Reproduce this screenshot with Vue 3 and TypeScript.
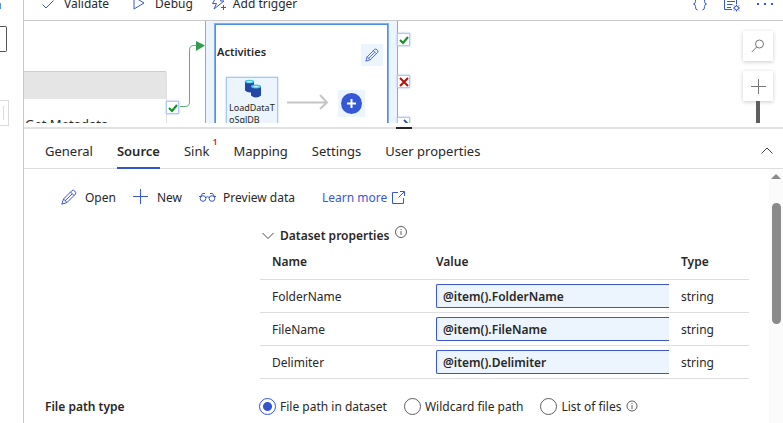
<script setup lang="ts">
import { ref } from 'vue'

interface DatasetProperty {
  name: string
  value: string
  type: string
}

interface Tab {
  label: string
  errors?: number
}

const tabs: Tab[] = [
  { label: 'General' },
  { label: 'Source' },
  { label: 'Sink', errors: 1 },
  { label: 'Mapping' },
  { label: 'Settings' },
  { label: 'User properties' },
]
const activeTab = ref('Source')

const properties = ref<DatasetProperty[]>([
  { name: 'FolderName', value: '@item().FolderName', type: 'string' },
  { name: 'FileName', value: '@item().FileName', type: 'string' },
  { name: 'Delimiter', value: '@item().Delimiter', type: 'string' },
])

const pathTypes = ['File path in dataset', 'Wildcard file path', 'List of files']
const pathType = ref(pathTypes[0])
</script>

<template>
  <div class="page">
    <aside class="rail">
      <i class="rail-accent"></i>
      <i class="rail-search"></i>
      <i class="rail-item"></i>
    </aside>

    <main class="main">
      <header class="toolbar">
        <button class="tool">
          <svg width="12" height="16" viewBox="0 0 12 16" class="line"><path d="M.5 8.500 4 12 11.500 4.500" /></svg>
          Validate
        </button>
        <button class="tool">
          <svg width="12" height="16" viewBox="0 0 12 16" class="line"><path d="M1 1v12l10-6z" /></svg>
          Debug
        </button>
        <button class="tool trigger">
          <svg width="16" height="16" viewBox="0 0 16 16" class="line"><path d="M6 0h6L9.500 5H13L3 13 5.500 7.500H1.500zM12.500 9v5M10 11.500h5" /></svg>
          Add trigger
        </button>
        <span class="spacer"></span>
        <button class="tool glyph" aria-label="Code">
          <svg width="16" height="16" viewBox="0 0 16 16" class="line"><path d="M5.500 0Q3.500 0 3.500 2V4.500Q3.500 6.500 1.500 7q2 .5 2 2.500V10Q3.500 13 5.500 13M10.500 0q2 0 2 2v2.500q0 2 2 2.500-2 .5-2 2.500v.5q0 3-2 3" /></svg>
        </button>
        <button class="tool glyph" aria-label="Properties">
          <svg width="16" height="16" viewBox="0 0 16 16" class="line"><path d="M8 12.500H.5V.5h12V7M3 4.500h8M3 7.500h5.500M3 10.500h4" /><circle cx="12.500" cy="11" r="2" /><path d="M12.500 7.500V9M12.500 13v1.500M9 11h1.500M14.500 11H16M10 8.500l1 1M14 12.500l1 1M15 8.500l-1 1M11 12.500l-1 1" /></svg>
        </button>
        <button class="tool glyph" aria-label="More">
          <svg width="18" height="16" viewBox="0 0 18 16" fill="#3a57d0"><path d="M1 6h2v2H1zM8 6h2v2H8zM15 6h2v2h-2z" /></svg>
        </button>
      </header>

      <section class="canvas">
        <div class="meta-node"><div class="meta-head"></div><div class="meta-title">Get Metadata</div></div>
        <div class="loop-node">
          <div class="loop-inner">
            <div class="loop-head">
              <b>Activities</b>
              <button class="edit" aria-label="Edit activities">
                <svg width="14" height="14" viewBox="0 0 16 16" class="line"><path d="M1 15l1.500-5L11 1.500q1.500-1 2.800.7 1.700 1.300.7 2.800L6 13.500zM2.500 10 6 13.500M9.500 3l3.500 3.500M4 11.800 11 5" /></svg>
              </button>
            </div>
            <div class="flow">
              <div class="copy-card">
                <svg width="18" height="19" viewBox="0 0 18 19">
                  <path d="M1 2.500v9q2 2 5 2h4v-11z" fill="#2447a5" />
                  <ellipse cx="5.500" cy="2.500" rx="4.800" ry="1.800" fill="#45c5e4" />
                  <ellipse cx="5.500" cy="2.800" rx="3" ry=".8" fill="#c2f2fb" />
                  <path d="M7 7.500v9q2 2 5 2t5-2v-9z" fill="#2447a5" />
                  <ellipse cx="12" cy="7.500" rx="5" ry="1.900" fill="#45c5e4" />
                  <ellipse cx="12" cy="7.700" rx="3" ry=".8" fill="#c2f2fb" />
                </svg>
                <div class="copy-name">LoadDataToSqlDB</div>
              </div>
              <svg class="flow-arrow" width="42" height="16" viewBox="0 0 42 16" fill="none" stroke="#c8c6c4" stroke-width="2"><path d="M0 8.500h40M33 1l7 7.500L33 15" /></svg>
              <button class="add" aria-label="Add activity">
                <svg width="21" height="21" viewBox="0 0 21 21"><circle cx="10.500" cy="10.500" r="10.500" fill="#3558d6" /><path d="M10.500 6v9M6 10.500h9" stroke="#fff" stroke-width="2" /></svg>
              </button>
            </div>
          </div>
        </div>
        <svg class="link" width="28" height="72" viewBox="0 0 28 72">
          <path d="M2 65.500h5q4.500 0 4.500-4.500V9q0-4.500 4.500-4.500h4" fill="none" stroke="#5fb277" />
          <path d="M18 0l9 4.500L18 10z" fill="#319b50" />
        </svg>
        <span class="port port-meta"><svg width="10" height="10" viewBox="0 0 10 10"><path d="M1 5l3 3 5-6" stroke="#0b9320" /></svg></span>
        <span class="port port-ok"><svg width="10" height="10" viewBox="0 0 10 10"><path d="M1 5l3 3 5-6" stroke="#0b9320" /></svg></span>
        <span class="port port-fail"><svg width="10" height="10" viewBox="0 0 10 10"><path d="M1 1l8 8M9 1L1 9" stroke="#b80d0d" /></svg></span>
        <span class="port port-done"><svg width="10" height="10" viewBox="0 0 10 10"><path d="M5 1l4 4-4 4M0 5h8" stroke="#2c59b8" /></svg></span>
        <div class="zoom">
          <button aria-label="Search canvas"><svg width="14" height="14" viewBox="0 0 14 14"><circle cx="8.500" cy="5" r="4" /><path d="M5.600 8 .8 13" /></svg></button>
          <button aria-label="Zoom in"><svg width="15" height="15" viewBox="0 0 15 15"><path d="M7.500 0v15M0 7.500h15" /></svg></button>
          <i></i>
        </div>
      </section>

      <div class="splitter"><i></i></div>

      <nav class="tabs">
        <button
          v-for="tab in tabs"
          :key="tab.label"
          class="tab"
          :class="{ active: tab.label === activeTab }"
          @click="activeTab = tab.label"
        >
          {{ tab.label }}<sup v-if="tab.errors">{{ tab.errors }}</sup>
        </button>
        <span class="spacer"></span>
        <button class="collapse" aria-label="Collapse">
          <svg width="12" height="8" viewBox="0 0 12 8"><path d="M.5 6.500 6 1l5.500 5.500" /></svg>
        </button>
      </nav>

      <div class="panel">
        <div class="content">
          <div class="actions">
            <button class="action">
              <svg width="16" height="16" viewBox="0 0 16 16" class="line"><path d="M.8 15.200l1.700-5.200L11 1.500q1.500-1 2.800.7 1.700 1.300.7 2.800L6 13.500zM2.500 10 6 13.500M9.500 3l3.500 3.500M4 11.800 11 5" /></svg>
              Open
            </button>
            <button class="action">
              <svg width="16" height="16" viewBox="0 0 16 16" class="line"><path d="M7.500 0v15M0 7.500h15" /></svg>
              New
            </button>
            <button class="action preview">
              <svg width="17" height="16" viewBox="0 0 17 16" class="line"><circle cx="4" cy="9.500" r="2.800" /><circle cx="13" cy="9.500" r="2.800" /><path d="M6.500 8.500q2-1.500 4 0M0 7.500h2.500M14.500 7.500H17M1.500 7.500 3.500 4.500h2.500M15.500 7.500 13.500 4.500h-2.500" /></svg>
              Preview data
            </button>
            <a class="learn" href="#">
              Learn more
              <svg width="13" height="13" viewBox="0 0 13 13" class="line"><path d="M6 1.500H.5v11h11V7M8 .5h4.500V5M12.500.5 6.500 6.500" /></svg>
            </a>
          </div>

          <section class="dataset">
            <h2>
              <svg width="12" height="8" viewBox="0 0 12 8" class="chevron"><path d="M.5 1 6 6.500 11.500 1" /></svg>
              Dataset properties
              <svg width="12" height="12" viewBox="0 0 12 12" class="info raised"><circle cx="6" cy="6" r="5.500" /><path d="M6 5v4M6 3v1" /></svg>
            </h2>
            <table>
              <thead>
                <tr><th class="col-name">Name</th><th>Value</th><th class="col-type">Type</th></tr>
              </thead>
              <tbody>
                <tr v-for="row in properties" :key="row.name">
                  <td>{{ row.name }}</td>
                  <td class="value"><input v-model="row.value" type="text" :aria-label="row.name" /></td>
                  <td>{{ row.type }}</td>
                </tr>
              </tbody>
            </table>
          </section>

          <div class="path-row" role="radiogroup" aria-labelledby="path-label">
            <span id="path-label" class="path-label">File path type</span>
            <label v-for="option in pathTypes" :key="option" class="option">
              <input v-model="pathType" type="radio" name="path-type" :value="option" />
              {{ option }}
            </label>
            <svg width="12" height="12" viewBox="0 0 12 12" class="info"><circle cx="6" cy="6" r="5" /><path d="M6 5v4M6 3v1" /></svg>
          </div>
        </div>
        <div class="scrollbar"><i class="up"></i><i class="thumb"></i></div>
      </div>
    </main>
  </div>
</template>

<style>
body {
  background: #fff;
}
</style>

<style scoped>
* {
  box-sizing: border-box;
}
.page {
  display: flex;
  height: 100vh;
  overflow: hidden;
  font: 12px/19px "Noto Sans", "Open Sans", sans-serif;
  color: #292827;
}
button {
  border: 0;
  padding: 0;
  background: none;
  font: inherit;
  color: inherit;
  white-space: nowrap;
}
svg {
  display: block;
  flex: none;
}
.line {
  fill: none;
  stroke: #3a57d0;
}
.spacer {
  flex: 1;
}
.rail {
  flex: none;
  width: 24px;
  border-right: 1px solid #c8c8c8;
}
.rail i {
  display: block;
}
.rail-accent {
  width: 1px;
  height: 6px;
  margin: 3px 0 17px;
  background: #5b94e0;
}
.rail-search {
  width: 7px;
  height: 26px;
  border: 1px solid #555;
  border-left: 0;
  border-radius: 0 2px 2px 0;
}
.rail-item {
  width: 9px;
  height: 26px;
  margin-top: 48px;
  padding: 5px 4px 5px 0;
  border: 1px solid #dcdcdc;
  border-left: 0;
}
.rail-item::after {
  content: "";
  display: block;
  height: 14px;
  border-right: 1px solid #dcdcdc;
}
.main {
  flex: 1;
  min-width: 0;
  display: flex;
  flex-direction: column;
}
.toolbar {
  flex: none;
  display: flex;
  align-items: flex-end;
  height: 21px;
  padding: 0 9px 7px 18px;
  border-bottom: 1px solid #c8c8c8;
  overflow: hidden;
}
.tool {
  display: flex;
  align-items: center;
  gap: 10px;
  margin-right: 24px;
}
.tool.trigger {
  gap: 6px;
  margin-left: -6px;
}
.tool.glyph {
  margin: 0 0 0 16px;
}
.canvas {
  position: relative;
  flex: none;
  height: 102px;
  overflow: hidden;
}
.meta-node {
  position: absolute;
  left: 0;
  top: 50px;
  width: 143px;
  height: 80px;
  border: 1px solid #ccc;
  border-left: 0;
  border-right-color: #e1e1e1;
  border-radius: 0 2px 0 0;
}
.meta-head {
  height: 27px;
  background: #e5e5e5;
}
.meta-title {
  padding: 16px 0 0 1px;
  font-size: 13px;
}
.loop-node {
  position: absolute;
  left: 181px;
  top: 0;
  width: 193px;
  height: 130px;
  padding: 3px 9px 0;
  border: solid #86a6ee;
  border-width: 0 1px;
  background: #ecf4fd;
}
.loop-inner {
  height: 130px;
  border: 1px solid #4f8fe0;
  box-shadow: 0 0 0 1px #7fb0ea;
  background: #fff;
}
.loop-head {
  display: flex;
  align-items: center;
  justify-content: space-between;
  padding: 19px 4px 0 1px;
  font-size: 11px;
}
.loop-head b {
  font-weight: 600;
  margin-top: -8px;
}
.edit {
  display: grid;
  place-items: center;
  width: 22px;
  height: 22px;
  background: #ecf4fd;
}
.flow {
  display: flex;
  align-items: flex-start;
  padding: 11px 0 0 10px;
}
.copy-card {
  flex: none;
  width: 52px;
  height: 60px;
  padding: 1px 0 0 2px;
  border: 1px solid #a5c9f3;
  box-shadow: 0 0 2px #a5c9f3;
  background: #ecf4fd;
  font-size: 9px;
  line-height: 12px;
}
.copy-card svg {
  margin: 0 0 4px 15px;
}
.copy-name {
  word-break: break-all;
}
.flow-arrow {
  margin: 17px 9px 0;
}
.add {
  display: grid;
  place-items: center;
  width: 27px;
  height: 27px;
  margin-top: 13px;
  background: #ecf4fd;
}
.link {
  position: absolute;
  left: 154px;
  top: 20px;
}
.port {
  position: absolute;
  display: grid;
  place-items: center;
  width: 13px;
  height: 13px;
  border: 1px solid #b4c8f6;
  box-shadow: 0 0 2px #9db8f2;
  background: #fff;
}
.port path {
  fill: none;
  stroke-width: 2;
}
.port-meta {
  left: 142px;
  top: 80px;
}
.port-ok {
  left: 373px;
  top: 12px;
}
.port-fail {
  left: 373px;
  top: 54px;
}
.port-done {
  left: 373px;
  top: 96px;
}
.zoom {
  position: absolute;
  right: 10px;
  top: 10px;
}
.zoom button {
  display: grid;
  place-items: center;
  width: 30px;
  height: 30px;
  margin-bottom: 10px;
  background: #fff;
  box-shadow: 0 1px 4px #ccc;
}
.zoom svg {
  fill: none;
  stroke: #797775;
}
.zoom i {
  display: block;
  width: 4px;
  height: 30px;
  margin: -10px auto 0;
  background: #605e5c;
}
.splitter {
  flex: none;
  height: 6px;
  padding-top: 4px;
}
.splitter::after {
  content: "";
  display: block;
  height: 2px;
  margin-top: -2px;
  background: #e1e1e1;
}
.splitter i {
  display: block;
  position: relative;
  width: 16px;
  height: 2px;
  margin: 0 auto;
  background: #252423;
}
.tabs {
  flex: none;
  display: flex;
  gap: 24px;
  height: 40px;
  padding: 0 10px 0 21px;
  border-bottom: 1px solid #dedede;
  font-size: 13px;
  line-height: 18px;
}
.tab {
  position: relative;
  padding-top: 4px;
  height: 40px;
}
.tab.active {
  font-weight: 600;
  border-bottom: 2px solid #3355d1;
  padding-top: 6px;
}
.tab sup {
  position: absolute;
  left: 100%;
  top: 5px;
  margin-left: 3px;
  font-size: 9px;
  font-weight: 600;
  line-height: 16px;
  color: #e0202c;
}
.collapse svg,
.chevron {
  fill: none;
  stroke: #484644;
}
.collapse {
  padding-top: 4px;
}
.panel {
  flex: 1;
  min-height: 0;
  display: flex;
}
.content {
  flex: 1;
  min-width: 0;
  padding: 18px 20px 0 21px;
  overflow: hidden;
}
.actions {
  display: flex;
  align-items: center;
  height: 20px;
  padding-left: 16px;
}
.action {
  display: flex;
  align-items: center;
  gap: 8px;
  margin-right: 17px;
}
.action.preview {
  gap: 7px;
  margin-right: 27px;
}
.learn {
  display: flex;
  align-items: center;
  gap: 5px;
  color: #3a57d0;
  text-decoration: none;
  white-space: nowrap;
}
.dataset {
  margin-left: 215px;
}
h2 {
  display: flex;
  align-items: center;
  gap: 6px;
  height: 19px;
  margin: 19px 0 0;
  padding-left: 2px;
  font-size: 12px;
  font-weight: 600;
}
.info {
  fill: none;
  stroke: #605e5c;
}
.raised {
  align-self: flex-start;
}
table {
  width: 100%;
  border-collapse: collapse;
  table-layout: fixed;
}
th,
td {
  height: 33px;
  padding: 1px 0 0 12px;
  border-bottom: 1px solid #dedede;
  text-align: left;
}
th {
  height: 34px;
  padding: 0;
  font-weight: 600;
}
th.col-name {
  width: 176px;
  padding-left: 12px;
}
th.col-type {
  width: 80px;
  padding-left: 12px;
}
td.value {
  padding: 0;
}
.value input {
  display: block;
  width: 100%;
  height: 24px;
  padding: 1px 6px 0;
  border: 1px solid #3a57d0;
  border-right: 0;
  border-radius: 2px 0 0 2px;
  outline: 0;
  background: #ecf4fd;
  font: inherit;
  font-weight: 600;
  color: inherit;
}
.path-row {
  display: flex;
  align-items: center;
  height: 19px;
  margin-top: 18px;
  white-space: nowrap;
}
.path-label {
  width: 214px;
  font-weight: 600;
}
.option {
  display: flex;
  align-items: center;
  gap: 4px;
  margin-right: 17px;
}
.option:last-of-type {
  margin-right: 5px;
}
.option input {
  appearance: none;
  width: 17px;
  height: 17px;
  margin: 0;
  border: 1px solid #605e5c;
  border-radius: 50%;
}
.option input:checked {
  border-color: #3355d1;
  background: radial-gradient(circle, #3355d1 4px, transparent 5px);
}
.scrollbar {
  display: flex;
  flex-direction: column;
  align-items: center;
  width: 14px;
  background: #fbfbfb;
}
.up {
  margin-top: 5px;
  border: 5px solid transparent;
  border-top: 0;
  border-bottom: 5px solid #8a8a8a;
}
.thumb {
  width: 9px;
  height: 121px;
  margin-top: 24px;
  border-radius: 5px;
  background: #8a8a8a;
}
</style>
